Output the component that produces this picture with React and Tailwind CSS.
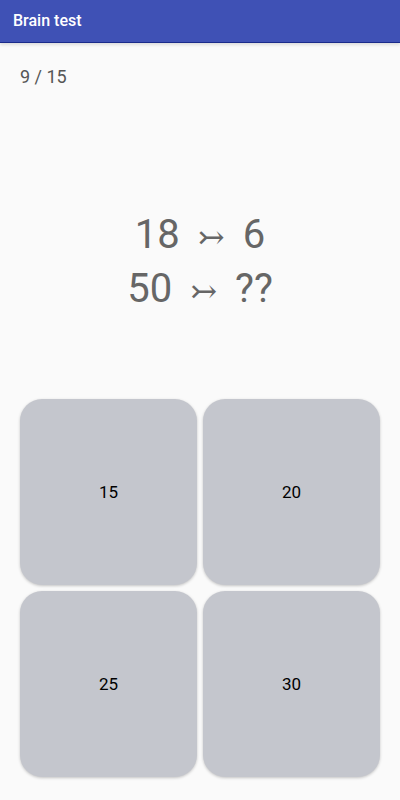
import React from 'react';

const answers = ['15', '20', '25', '30'];

const Arrow = () => (
  <span className="mx-[18px] text-[32px] leading-none font-['DejaVu_Serif',serif]">↣</span>
);

const App = () => {
  return (
    <div className="w-[400px] h-[800px] flex flex-col bg-[#fafafa] font-['Roboto',sans-serif]">
      <div className="h-[43px] shrink-0 bg-[#3f51b5] border-b border-[#1a2a8a] shadow-[0_2px_3px_rgba(0,0,0,0.12)] flex items-center px-[13px]">
        <span className="text-white text-[16px] font-medium leading-none">Brain test</span>
      </div>

      <div className="px-5 pt-[22px] text-[18px] leading-6 text-[#555]">9 / 15</div>

      <div className="flex flex-col items-center mt-[119px] text-[40px] leading-[54px] text-[#666]">
        <div className="flex items-baseline">
          <span>18</span>
          <Arrow />
          <span>6</span>
        </div>
        <div className="flex items-baseline">
          <span>50</span>
          <Arrow />
          <span>??</span>
        </div>
      </div>

      <div className="grid grid-cols-2 gap-[6px] px-5 mt-auto mb-[23px]">
        {answers.map(a => (
          <button
            key={a}
            className="h-[186px] rounded-[22px] bg-[#c4c6cd] shadow-[0_1px_3px_rgba(0,0,0,0.22)] flex items-center justify-center text-[17px] text-black pt-[2px]"
          >
            {a}
          </button>
        ))}
      </div>
    </div>
  );
};

export default App;
